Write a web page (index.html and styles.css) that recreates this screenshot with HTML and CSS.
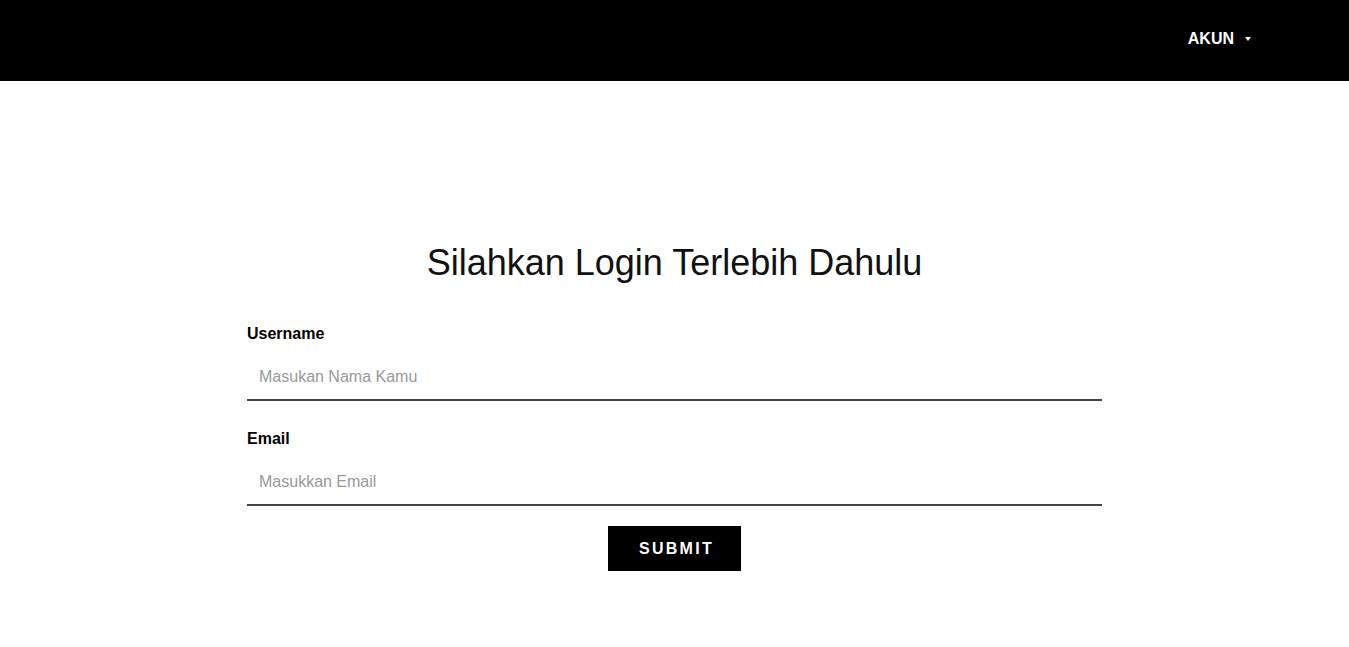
FILE: index.html
```html
<!DOCTYPE html>
<html lang="id">
<head>
<meta charset="utf-8">
<title>Login</title>
<link rel="stylesheet" href="styles.css">
</head>
<body>
<header class="topbar">
  <nav class="nav">
    <a class="nav-item" href="#">AKUN<span class="caret"></span></a>
  </nav>
</header>
<main class="main">
  <h1 class="title">Silahkan Login Terlebih Dahulu</h1>
  <form class="form">
    <div class="group">
      <label class="label" for="username">Username</label>
      <input class="input" id="username" type="text" placeholder="Masukan Nama Kamu">
    </div>
    <div class="group">
      <label class="label" for="email">Email</label>
      <input class="input" id="email" type="email" placeholder="Masukkan Email">
    </div>
    <div class="actions">
      <button class="submit" type="submit">SUBMIT</button>
    </div>
  </form>
</main>
</body>
</html>
```
FILE: styles.css
```css
* { box-sizing: border-box; }
html, body {
  margin: 0;
  padding: 0;
  background: #fff;
  font-family: "Liberation Sans", Arial, sans-serif;
  color: #000;
}
.topbar {
  height: 81px;
  background: #000;
  display: flex;
  justify-content: flex-end;
  align-items: center;
  padding-right: 98px;
}
.nav {
  display: flex;
  align-items: center;
  height: 100%;
  padding-bottom: 4px;
}
.nav-item {
  color: #fff;
  text-decoration: none;
  font-weight: bold;
  font-size: 16px;
  display: flex;
  align-items: center;
}
.caret {
  display: inline-block;
  width: 0;
  height: 0;
  margin-left: 11px;
  border-left: 3.5px solid transparent;
  border-right: 3.5px solid transparent;
  border-top: 4px solid #fff;
  margin-top: 1px;
}
.main {
  padding-top: 161px;
}
.title {
  margin: 0;
  text-align: center;
  font-weight: normal;
  font-size: 36px;
  color: #111;
}
.form {
  max-width: 855px;
  margin: 41px auto 0;
}
.group {
  margin-bottom: 29px;
}
.group + .group {
  margin-bottom: 20px;
}
.label {
  display: block;
  font-weight: bold;
  font-size: 16px;
  height: 18px;
  margin-bottom: 13px;
}
.input {
  display: block;
  width: 100%;
  border: none;
  border-bottom: 2px solid #444;
  padding: 12px 12px 13px;
  font-family: "Liberation Sans", Arial, sans-serif;
  font-size: 16px;
  line-height: 18px;
  height: 45px;
  outline: none;
  background: transparent;
}
.input::placeholder {
  color: #999;
}
.actions {
  display: flex;
  justify-content: center;
}
.submit {
  background: #000;
  color: #fff;
  border: none;
  font-family: "Liberation Sans", Arial, sans-serif;
  font-weight: bold;
  font-size: 16px;
  letter-spacing: 2.3px;
  padding: 0 27px 0 31px;
  height: 45px;
  line-height: 18px;
  cursor: pointer;
}
```
